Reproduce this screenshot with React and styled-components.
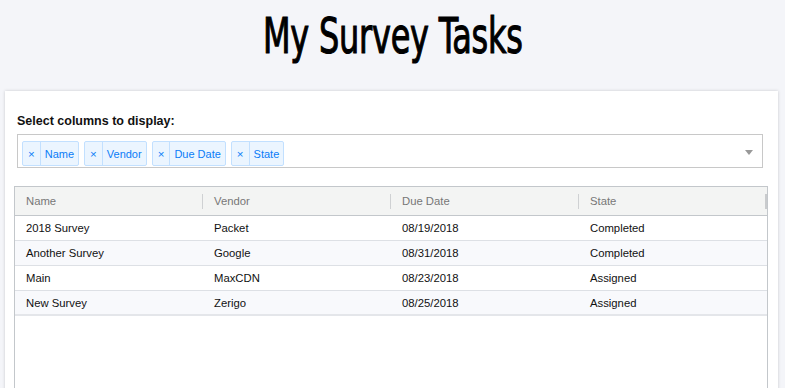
import React from 'react'
import styled, { createGlobalStyle } from 'styled-components'

const GlobalStyle = createGlobalStyle`
  body {
    margin: 0;
    background: #f4f5f9;
    font-family: "Liberation Sans", Arial, sans-serif;
    color: #111;
  }
`

const Page = styled.div`
  display: flex;
  flex-direction: column;
  height: 388px;
  overflow: hidden;
`

const Header = styled.header`
  flex-shrink: 0;
  height: 91px;
  display: flex;
  justify-content: center;
`

const Title = styled.h1`
  margin: 0;
  margin-top: 7px;
  font-family: "DejaVu Sans Condensed", "Liberation Sans Narrow", sans-serif;
  font-weight: 400;
  font-size: 50px;
  line-height: 58px;
  color: #000;
  letter-spacing: -0.3px;
  -webkit-text-stroke: 1.1px #000;
  transform: scaleX(0.71);
`

const Card = styled.section`
  flex-shrink: 0;
  margin: 0 7px 0 5px;
  background: #fff;
  box-shadow: 0 0 3px rgba(0, 0, 0, 0.18);
  padding-top: 23px;
`

const Label = styled.div`
  margin: 0 0 5px 12px;
  font-size: 12.5px;
  font-weight: 700;
  line-height: 15px;
  color: #111;
`

const Select = styled.div`
  margin: 0 15px 0 12px;
  height: 34px;
  box-sizing: border-box;
  border: 1px solid #c8c8c8;
  display: flex;
  align-items: flex-start;
  padding: 6px 0 0 4px;
  gap: 5px;
`

const Chip = styled.div`
  display: flex;
  align-items: stretch;
  height: 25px;
  box-sizing: border-box;
  background: #ebf5ff;
  border: 1px solid #c2e0ff;
  border-radius: 2px;
  color: #0a7cf7;
  font-size: 11px;
`

const ChipIcon = styled.span`
  display: flex;
  align-items: center;
  padding: 0 5px;
  border-right: 1px solid #c2e0ff;
  font-size: 11.5px;
`

const ChipLabel = styled.span`
  display: flex;
  align-items: center;
  padding: 0 4px 0 4px;
`

const Arrow = styled.span`
  margin-left: auto;
  margin-right: 9px;
  margin-top: 9px;
  width: 0;
  height: 0;
  border-style: solid;
  border-width: 5px 4px 0;
  border-color: #999 transparent transparent;
`

const Table = styled.div`
  margin: 18px 10px 0 9px;
  border: 1px solid #c3c7cb;
  border-bottom: none;
  min-height: 240px;
  font-size: 11.3px;
`

const HeadRow = styled.div`
  display: grid;
  grid-template-columns: repeat(4, 1fr);
  height: 28px;
  background: #f3f4f3;
  border-bottom: 1px solid #c3c7cb;
`

const HeadCell = styled.div`
  position: relative;
  display: flex;
  align-items: center;
  padding-left: 11px;
  color: #777;

  &::after {
    content: '';
    position: absolute;
    right: 0;
    top: 7px;
    height: 15px;
    width: ${p => (p.last ? '2px' : '1px')};
    background: ${p => (p.last ? '#c9cbcd' : '#cfd1d3')};
  }
`

const Row = styled.div`
  display: grid;
  grid-template-columns: repeat(4, 1fr);
  height: 25px;
  box-sizing: border-box;
  background: ${p => (p.striped ? '#f8f9fc' : '#fff')};
  border-bottom: ${p => (p.lastRow ? '2px solid #e4e6ea' : '1px solid #dde0e5')};
`

const Cell = styled.div`
  display: flex;
  align-items: center;
  padding-left: 11px;
  color: #111;
`

const columns = ['Name', 'Vendor', 'Due Date', 'State']

const tasks = [
  ['2018 Survey', 'Packet', '08/19/2018', 'Completed'],
  ['Another Survey', 'Google', '08/31/2018', 'Completed'],
  ['Main', 'MaxCDN', '08/23/2018', 'Assigned'],
  ['New Survey', 'Zerigo', '08/25/2018', 'Assigned'],
]

const App = () => (
  <Page>
    <GlobalStyle />
    <Header>
      <Title>My Survey Tasks</Title>
    </Header>
    <Card>
      <Label>Select columns to display:</Label>
      <Select>
        {columns.map(col => (
          <Chip key={col}>
            <ChipIcon>×</ChipIcon>
            <ChipLabel>{col}</ChipLabel>
          </Chip>
        ))}
        <Arrow />
      </Select>
      <Table>
        <HeadRow>
          {columns.map((col, i) => (
            <HeadCell key={col} last={i === columns.length - 1}>
              {col}
            </HeadCell>
          ))}
        </HeadRow>
        {tasks.map((task, index) => (
          <Row key={index} striped={index % 2 === 1} lastRow={index === tasks.length - 1}>
            {task.map((value, i) => (
              <Cell key={i}>{value}</Cell>
            ))}
          </Row>
        ))}
      </Table>
    </Card>
  </Page>
)

export default App
